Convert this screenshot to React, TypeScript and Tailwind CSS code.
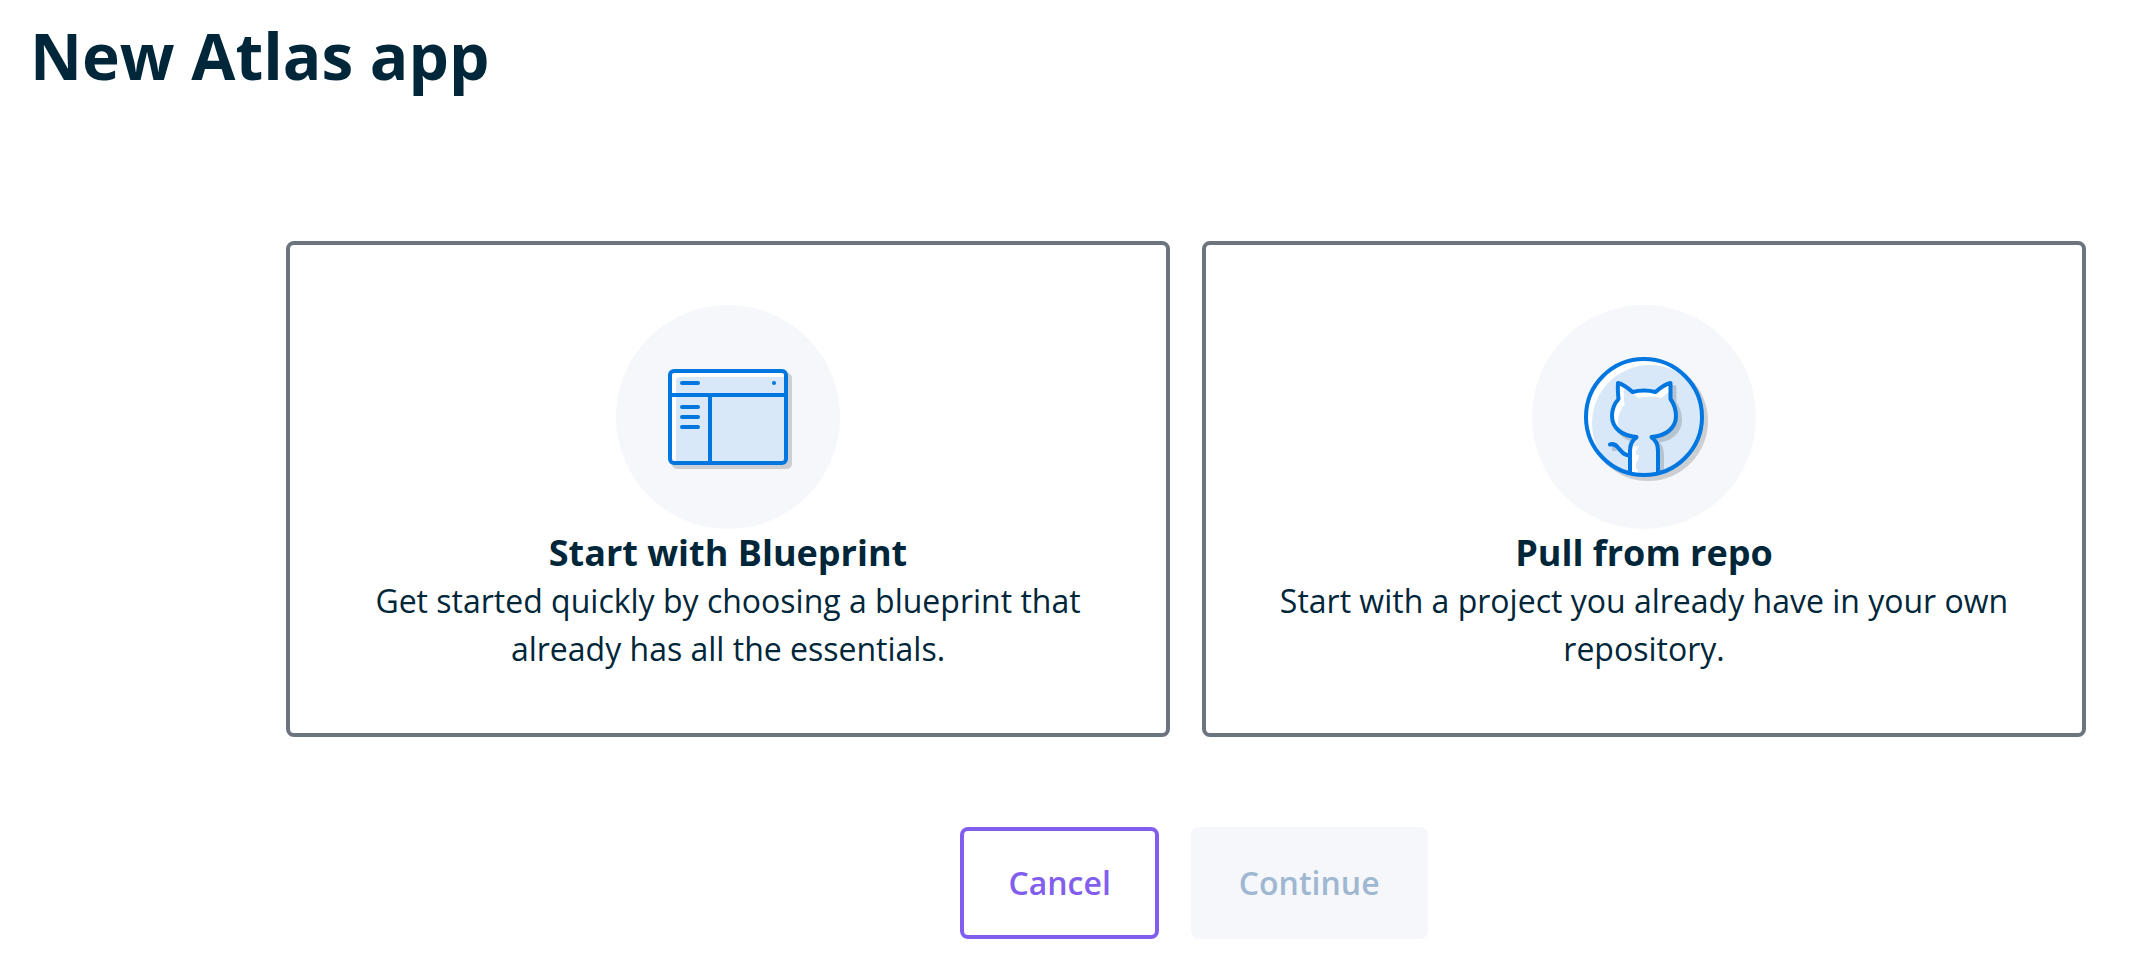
import { useState } from "react";
import type { ReactNode } from "react";

const HEAD =
  "M86 78C91 79 96 83 100.500 87C108 85 116 85 123.500 87C128 83 133 79 138.500 78V94C142 99 144 105 144 111C144 123 134 131 120 132H104C90 131 80 123 80 111C80 105 82 99 86.500 94C86 89 85.500 84 86 78Z";
const BODY =
  "M105 132C100 135 98 140 98 146V172H126V146C126 140 124 135 119 132Z";

function BlueprintIcon() {
  return (
    <svg className="size-56" viewBox="0 0 224 224" fill="none" aria-hidden="true">
      <circle cx="112" cy="112" r="112" fill="#f5f7fb" />
      <rect x="56" y="68" width="120" height="96" rx="5" fill="#cdced2" />
      <rect x="54" y="66" width="116" height="92" rx="3" fill="#fff" />
      <path d="M64 72H170V158H60V76Q60 72 64 72Z" fill="#d9e8f8" />
      <g stroke="#0077e0" strokeWidth="4">
        <rect x="54" y="66" width="116" height="92" rx="4" />
        <path d="M54 90H170M94 90V158" />
        <path
          d="M66 78H82M66 102H82M66 112H82M66 122H82"
          strokeLinecap="round"
        />
      </g>
      <circle cx="158" cy="78" r="2" fill="#0077e0" />
    </svg>
  );
}

function RepoIcon() {
  return (
    <svg className="size-56" viewBox="0 0 224 224" fill="none" aria-hidden="true">
      <defs>
        <clipPath id="repo-disc">
          <circle cx="112" cy="112" r="58" />
        </clipPath>
        <clipPath id="repo-head">
          <path d={HEAD} />
        </clipPath>
      </defs>
      <circle cx="112" cy="112" r="112" fill="#f5f7fb" />
      <circle cx="116" cy="116" r="60" fill="#cdced2" />
      <circle cx="112" cy="112" r="58" fill="#fff" />
      <g clipPath="url(#repo-disc)">
        <circle cx="118" cy="118" r="58" fill="#d9e8f8" />
        <g
          transform="translate(4 4)"
          fill="#b6c3d0"
          stroke="#b6c3d0"
          strokeWidth="4"
          strokeLinejoin="round"
        >
          <path d={HEAD} />
          <path d="M110 132H119C124 135 126 140 126 146V172H110Z" />
        </g>
        <path d="M80 140H84L87 145L84 146H80Z" fill="#b6c3d0" />
        <path d={BODY} fill="#d9e8f8" />
        <path
          d="M98 172V146L102 141H107L105 145H104V150H107L106 155L104 158V164H106V172Z"
          fill="#fff"
        />
        <path
          d="M105 132C100 135 98 140 98 146V172M119 132C124 135 126 140 126 146V172"
          stroke="#0077e0"
          strokeWidth="4"
        />
        <path
          d="M78 139.500C81 138.500 84 140 86 142.500C90 147 92 150.500 98 150.500"
          stroke="#0077e0"
          strokeWidth="4"
          strokeLinecap="round"
        />
      </g>
      <path d={HEAD} fill="#fff" />
      <g clipPath="url(#repo-head)">
        <path d={HEAD} fill="#d9e8f8" transform="translate(6 6)" />
        <path d="M98 124H126V134H98Z" fill="#d9e8f8" />
      </g>
      <path
        d="M104.500 132C90 131 80 123 80 111C80 105 82 99 86.500 94C86 89 85.500 84 86 78C91 79 96 83 100.500 87C108 85 116 85 123.500 87C128 83 133 79 138.500 78V94C142 99 144 105 144 111C144 123 134 131 119.500 132"
        stroke="#0077e0"
        strokeWidth="4"
        strokeLinecap="round"
        strokeLinejoin="round"
      />
      <circle cx="112" cy="112" r="58" stroke="#0077e0" strokeWidth="4" />
    </svg>
  );
}

type OptionCardProps = {
  icon: ReactNode;
  title: string;
  description: string;
  selected: boolean;
  onSelect: () => void;
};

function OptionCard({ icon, title, description, selected, onSelect }: OptionCardProps) {
  return (
    <button
      type="button"
      aria-pressed={selected}
      onClick={onSelect}
      className="flex flex-1 cursor-pointer flex-col items-center rounded-lg border-4 border-[#6c757d] bg-white p-[60px] text-center aria-pressed:border-[#825eef]"
    >
      {icon}
      <span className="text-4xl leading-12 font-bold">{title}</span>
      <span className="text-[32px] leading-12">{description}</span>
    </button>
  );
}

export default function App() {
  const [choice, setChoice] = useState<"blueprint" | "repo" | null>(null);

  return (
    <main className="bg-white pb-10 font-['Open_Sans',sans-serif] text-[#00263a]">
      <h1 className="px-[30px] pt-2 text-[64px] leading-24 font-bold">New Atlas app</h1>
      <div className="mt-[137px] pr-[60px] pl-[286px]">
        <div className="flex gap-8">
          <OptionCard
            icon={<BlueprintIcon />}
            title="Start with Blueprint"
            description="Get started quickly by choosing a blueprint that already has all the essentials."
            selected={choice === "blueprint"}
            onSelect={() => setChoice("blueprint")}
          />
          <OptionCard
            icon={<RepoIcon />}
            title="Pull from repo"
            description="Start with a project you already have in your own repository."
            selected={choice === "repo"}
            onSelect={() => setChoice("repo")}
          />
        </div>
        <div className="mt-[90px] flex justify-center gap-8 pl-4 text-[32px] leading-12 font-semibold">
          <button
            type="button"
            onClick={() => setChoice(null)}
            className="cursor-pointer rounded-lg border-4 border-[#825eef] px-11 py-7 text-[#825eef]"
          >
            Cancel
          </button>
          <button
            type="button"
            disabled={choice === null}
            className="rounded-lg border-4 border-[#825eef] bg-[#825eef] px-11 py-7 text-white disabled:border-[#f5f7fb] disabled:bg-[#f5f7fb] disabled:text-[#9fb7d1]"
          >
            Continue
          </button>
        </div>
      </div>
    </main>
  );
}
